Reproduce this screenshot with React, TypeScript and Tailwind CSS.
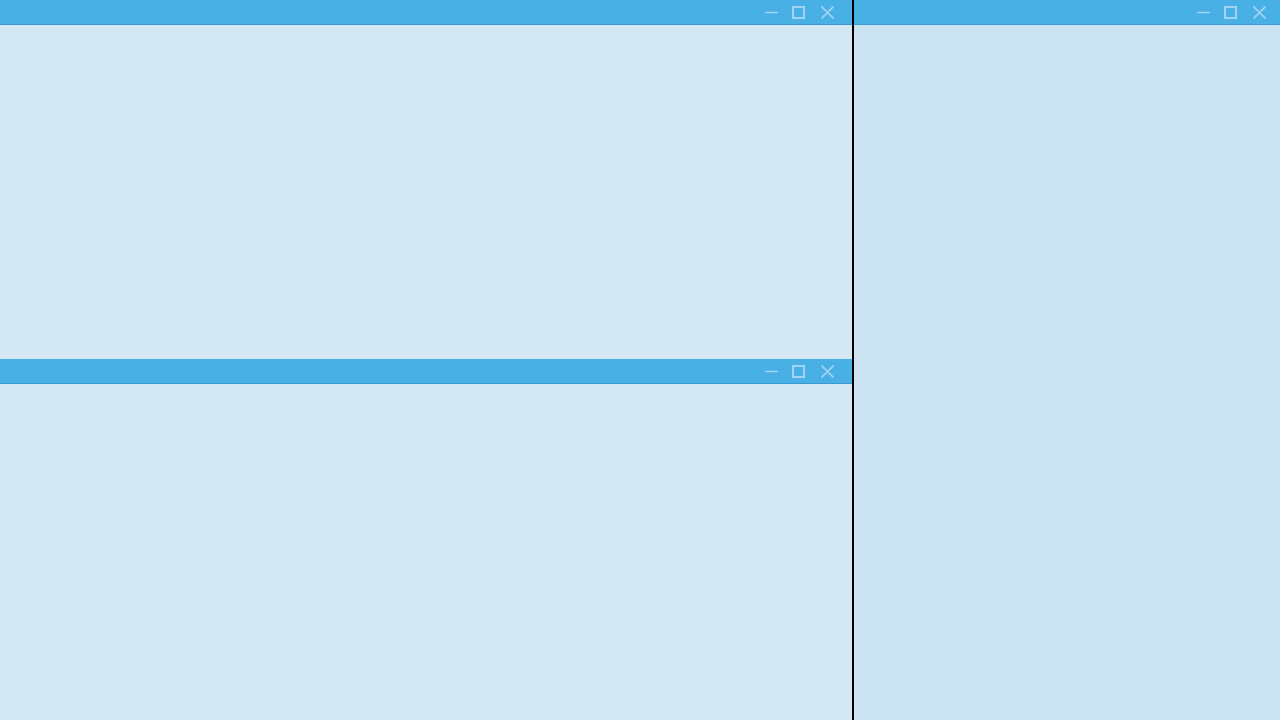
import React from 'react';

function WindowControls({ padRight }: { padRight: string }) {
  return (
    <div className={`flex h-full items-start justify-end pt-[6px] ${padRight}`}>
      {/* minimize */}
      <svg width="13" height="13" viewBox="0 0 13 13" className="text-[#a3d4ef]">
        <line x1="0" y1="6.5" x2="13" y2="6.5" stroke="currentColor" strokeWidth="1.5" />
      </svg>
      {/* maximize */}
      <svg width="13" height="13" viewBox="0 0 13 13" className="ml-[14px] text-[#a3d4ef]">
        <rect x="1" y="1" width="11" height="11" fill="none" stroke="currentColor" strokeWidth="2" />
      </svg>
      {/* close */}
      <svg width="13" height="13" viewBox="0 0 13 13" className="ml-[16px] text-[#a3d4ef]">
        <path d="M0.5 0.5 L12.5 12.5 M12.5 0.5 L0.5 12.5" stroke="currentColor" strokeWidth="1.6" />
      </svg>
    </div>
  );
}

function Pane({ className, body, padRight }: { className: string; body: string; padRight: string }) {
  return (
    <div className={`flex flex-col ${className}`}>
      <div className="h-[25px] shrink-0 bg-[#49b0e5] border-b border-[#3a9ad2]">
        <WindowControls padRight={padRight} />
      </div>
      <div className={`flex-1 ${body}`} />
    </div>
  );
}

export default function App() {
  return (
    <div className="flex h-[720px] w-[1280px] overflow-hidden">
      <div className="flex w-[852px] flex-col">
        <Pane className="h-[359px]" body="bg-[#d4e8f3]" padRight="pr-[18px]" />
        <Pane className="flex-1" body="bg-[#d4e8f3]" padRight="pr-[18px]" />
      </div>
      <div className="w-[2px] bg-black" />
      <Pane className="flex-1" body="bg-[#cce3f1]" padRight="pr-[14px]" />
    </div>
  );
}
